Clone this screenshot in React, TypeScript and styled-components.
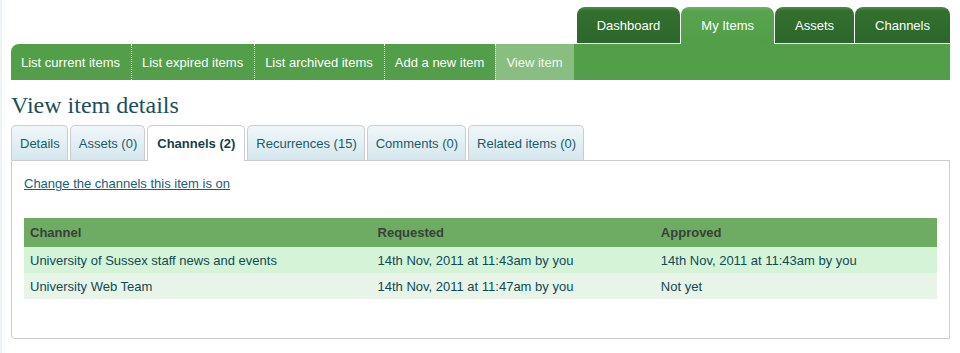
import React from "react";
import styled, { createGlobalStyle } from "styled-components";

const GlobalStyle = createGlobalStyle`
  html, body { margin: 0; padding: 0; background: #ffffff; }
  body { font-family: "Liberation Sans", Arial, sans-serif; font-size: 13px; }
`;

const Page = styled.div`
  width: 960px;
  min-height: 353px;
  box-sizing: border-box;
  padding: 7px 10px 0 11px;
  border-left: 2px solid #eef3f6;
`;

const Shell = styled.div`
  margin-left: -2px;
`;

const TopTabs = styled.nav`
  display: flex;
  justify-content: flex-end;
  gap: 1px;
  border-bottom: 1px solid #ffffff;
`;

const TopTab = styled.a<{ $active?: boolean }>`
  box-sizing: border-box;
  padding: 0 20px;
  display: flex;
  align-items: center;
  justify-content: center;
  color: #ffffff;
  font-size: 13px;
  text-decoration: none;
  border-radius: 8px 8px 0 0;
  background: ${(p) =>
    p.$active
      ? "linear-gradient(#6eb266 0px, #58a34f 4px, #519e48 100%)"
      : "linear-gradient(#4f8a48 0px, #336f2e 4px, #2c672b 100%)"};
  margin-bottom: ${(p) => (p.$active ? "-1px" : "0")};
  height: ${(p) => (p.$active ? "37px" : "36px")};
`;

const SubNav = styled.nav`
  display: flex;
  height: 36px;
  background: #529e49;
  border-radius: 8px 0 0 0;
`;

const SubItem = styled.a<{ $active?: boolean; $first?: boolean }>`
  display: flex;
  align-items: center;
  padding: 0 11px 0 10px;
  text-decoration: none;
  font-size: 13px;
  border-left: ${(p) => (p.$first ? "none" : "1px dotted #ffffff")};
  background: ${(p) => (p.$active ? "#88be80" : "transparent")};
  color: ${(p) => (p.$active ? "#f2f8f0" : "#ffffff")};
`;

const Title = styled.h1`
  margin: 12px 0 0 0;
  font-family: "Liberation Serif", Georgia, serif;
  font-weight: normal;
  font-size: 24px;
  color: #1c4f5c;
  line-height: 26px;
`;

const Tabs = styled.div`
  display: flex;
  gap: 2px;
  margin-top: 7px;
  position: relative;
  z-index: 1;
`;

const Tab = styled.a<{ $active?: boolean }>`
  box-sizing: border-box;
  display: flex;
  align-items: center;
  font-size: 13px;
  text-decoration: none;
  border: 1px solid #cccccc;
  border-bottom: none;
  border-radius: 5px 5px 0 0;
  color: ${(p) => (p.$active ? "#173f49" : "#1b5a6c")};
  font-weight: ${(p) => (p.$active ? "bold" : "normal")};
  background: ${(p) =>
    p.$active ? "#ffffff" : "linear-gradient(#f0f7f9, #d3e7ee)"};
  margin-bottom: ${(p) => (p.$active ? "-1px" : "0")};
  height: ${(p) => (p.$active ? "36px" : "35px")};
  padding: ${(p) => (p.$active ? "0 9px" : "0 7px 0 8px")};
`;

const Panel = styled.section`
  border: 1px solid #cccccc;
  border-radius: 0 0 0 4px;
  padding: 15px 12px 39px 12px;
`;

const ChangeLink = styled.a`
  color: #17607c;
  text-decoration: underline;
  font-size: 13px;
  line-height: 16px;
`;

const Table = styled.table`
  margin-top: 26px;
  width: 100%;
  border-collapse: collapse;
  font-size: 13px;
`;

const Th = styled.th<{ $w: number }>`
  width: ${(p) => p.$w}px;
  text-align: left;
  background: #6dac62;
  color: #3a3f3a;
  font-weight: bold;
  height: 29px;
  padding: 0 6px;
`;

const Row = styled.tr<{ $alt?: boolean }>`
  background: ${(p) => (p.$alt ? "#e8f4e8" : "#d5f4d7")};
`;

const Td = styled.td`
  color: #0e4a55;
  height: 26px;
  padding: 0 6px;
`;

const topTabs = [
  { label: "Dashboard" },
  { label: "My Items", active: true },
  { label: "Assets" },
  { label: "Channels" },
];

const subItems = [
  { label: "List current items" },
  { label: "List expired items" },
  { label: "List archived items" },
  { label: "Add a new item" },
  { label: "View item", active: true },
];

const tabs = [
  { label: "Details" },
  { label: "Assets (0)" },
  { label: "Channels (2)", active: true },
  { label: "Recurrences (15)" },
  { label: "Comments (0)" },
  { label: "Related items (0)" },
];

const rows = [
  {
    channel: "University of Sussex staff news and events",
    requested: "14th Nov, 2011 at 11:43am by you",
    approved: "14th Nov, 2011 at 11:43am by you",
  },
  {
    channel: "University Web Team",
    requested: "14th Nov, 2011 at 11:47am by you",
    approved: "Not yet",
  },
];

export default function App() {
  return (
    <>
      <GlobalStyle />
      <Page>
        <Shell>
          <TopTabs>
            {topTabs.map((t) => (
              <TopTab key={t.label} $active={t.active}>
                {t.label}
              </TopTab>
            ))}
          </TopTabs>
          <SubNav>
            {subItems.map((s, i) => (
              <SubItem key={s.label} $first={i === 0} $active={s.active}>
                {s.label}
              </SubItem>
            ))}
          </SubNav>
          <Title>View item details</Title>
          <Tabs>
            {tabs.map((t) => (
              <Tab key={t.label} $active={t.active}>
                {t.label}
              </Tab>
            ))}
          </Tabs>
          <Panel>
            <ChangeLink>Change the channels this item is on</ChangeLink>
            <Table>
              <thead>
                <tr>
                  <Th $w={350}>Channel</Th>
                  <Th $w={282}>Requested</Th>
                  <Th $w={281}>Approved</Th>
                </tr>
              </thead>
              <tbody>
                {rows.map((r, i) => (
                  <Row key={r.channel} $alt={i % 2 === 1}>
                    <Td>{r.channel}</Td>
                    <Td>{r.requested}</Td>
                    <Td>{r.approved}</Td>
                  </Row>
                ))}
              </tbody>
            </Table>
          </Panel>
        </Shell>
      </Page>
    </>
  );
}
